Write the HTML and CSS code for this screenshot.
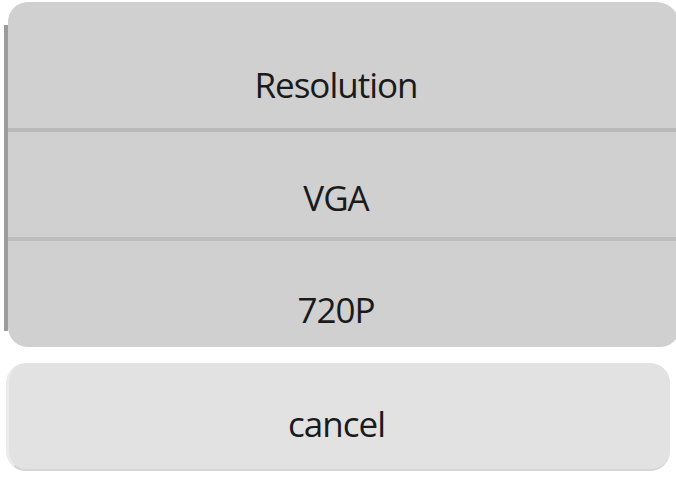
FILE: index.html
```html
<!DOCTYPE html>
<html lang="en">
  <head>
    <meta charset="UTF-8" />
    <meta name="viewport" content="width=device-width, initial-scale=1.0" />
    <title>Resolution</title>
    <link rel="stylesheet" href="styles.css">
  </head>
  <body>
    <!-- Resolution picker sheet -->
    <div class="sheet">
      <div class="menu">
        <div class="row row-title">Resolution</div>
        <div class="row row-vga">VGA</div>
        <div class="row row-hd">720P</div>
      </div>

      <div class="cancel">cancel</div>
    </div>
  </body>
</html>
```

FILE: styles.css
```css
* {
  margin: 0;
  padding: 0;
  box-sizing: border-box;
}

body {
  background-color: #fff;
  color: #1a1a1a;
  font-family: "Open Sans", "Noto Sans", sans-serif;
  font-size: 35px;
  letter-spacing: -1px;
  line-height: 1;
}

.sheet {
  padding: 2px 0 0 8px;
  display: flex;
  flex-direction: column;
  gap: 16px;
}

.menu {
  position: relative;
  background-color: #d0d0d0;
  border-radius: 20px 24px 20px 20px;
  margin-right: -4px;
}

/* dark strip down the left side */
.menu::before {
  content: "";
  position: absolute;
  left: -4px;
  top: 23px;
  bottom: 16px;
  width: 4px;
  background-color: #9c9c9c;
}

.row {
  text-align: center;
  padding-right: 16px;
}

.row-title {
  height: 130px;
  padding-top: 65px;
  border-bottom: 4px solid #b9b9b9;
}

.row-vga {
  height: 109px;
  padding-top: 48px;
  border-bottom: 4px solid #bdbdbd;
}

.row-hd {
  height: 106px;
  padding-top: 51px;
}

.cancel {
  height: 108px;
  padding: 43px 6px 0 0;
  margin-left: -2px;
  margin-right: 6px;
  text-align: center;
  background-color: #e2e2e2;
  border-radius: 20px;
  border-left: 3px solid #ebebeb;
  border-bottom: 2px solid #d6d6d6;
}
```
